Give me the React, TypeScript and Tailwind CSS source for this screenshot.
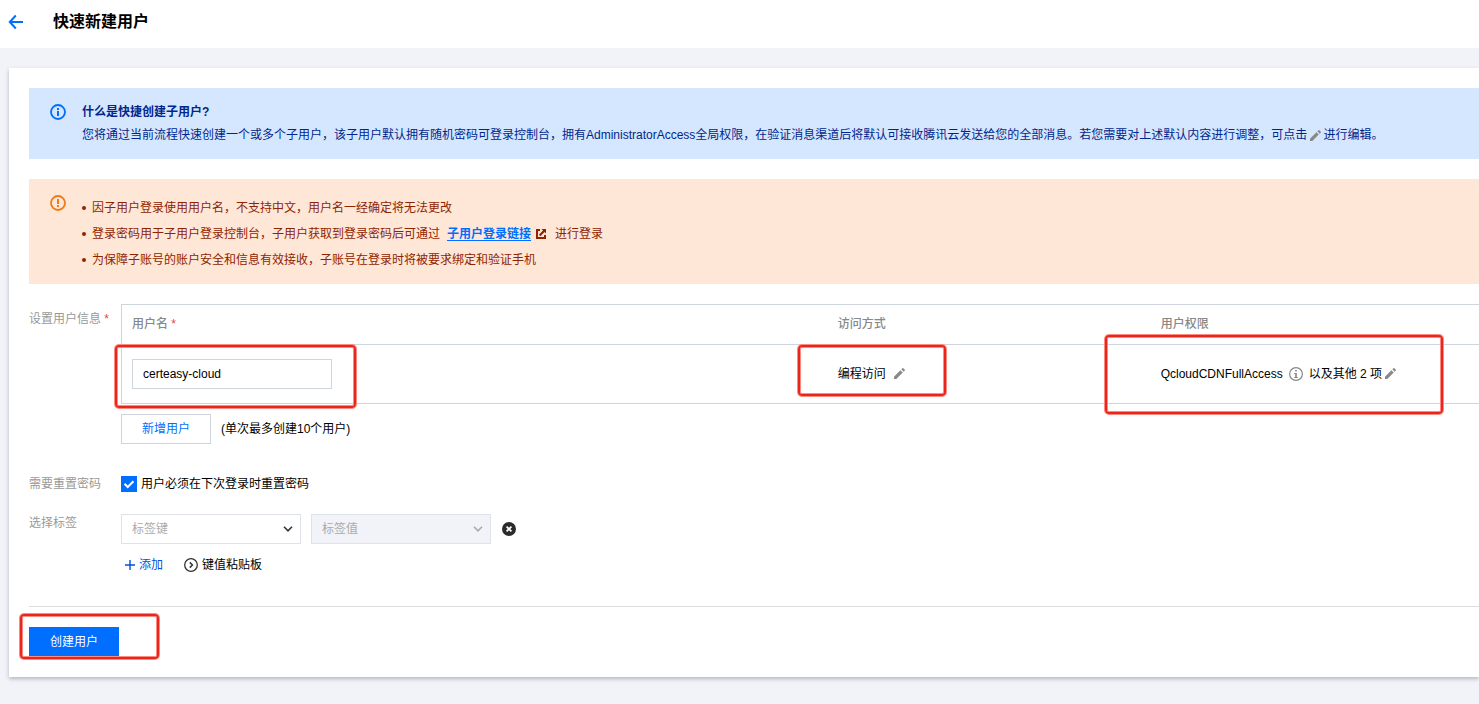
import { useState } from 'react'
import type { ReactNode } from 'react'

function PencilIcon() {
  return (
    <svg viewBox="3 3 18 18" className="size-[11px] fill-[#888]" aria-hidden="true">
      <path d="M3 17.2V21h3.8L17.3 10.5l-3.8-3.8L3 17.2zM20.7 7.1a1 1 0 0 0 0-1.4l-2.4-2.4a1 1 0 0 0-1.4 0l-1.9 1.9 3.8 3.8 1.9-1.9z" />
    </svg>
  )
}

function InfoIcon({ className }: { className: string }) {
  return (
    <svg viewBox="0 0 16 16" className={className} aria-hidden="true">
      <circle cx="8" cy="8" r="7" fill="none" stroke="currentColor" strokeWidth="1.8" />
      <path d="M7 4h2v2H7zM7 7h2v5H7z" fill="currentColor" />
    </svg>
  )
}

function Chevron() {
  return (
    <svg viewBox="0 0 10 6" className="pointer-events-none absolute right-2 top-3 h-1.5 w-2.5" aria-hidden="true">
      <path d="M1 0.8l4 4 4-4" fill="none" stroke="currentColor" strokeWidth="1.6" />
    </svg>
  )
}

// red marker frame drawn over the fields that matter
function Highlight({ className }: { className: string }) {
  return (
    <span
      className={`pointer-events-none absolute z-10 rounded-sm border-2 border-[#e8261c] shadow-[0_0_0_1px_#ff8a82,inset_0_0_0_1px_#ff8a82] ${className}`}
    />
  )
}

function FormRow({ label, labelClass, children }: { label: ReactNode; labelClass?: string; children: ReactNode }) {
  return (
    <div className="flex">
      <div className={`w-[92px] shrink-0 text-[#999] ${labelClass ?? ''}`}>{label}</div>
      <div className="min-w-0 flex-1">{children}</div>
    </div>
  )
}

export default function App() {
  const [username, setUsername] = useState('certeasy-cloud')
  const [resetPassword, setResetPassword] = useState(true)

  return (
    <div className="min-h-screen overflow-x-hidden bg-[#f2f3f8] pb-5 font-['Liberation_Sans','Noto_Sans_CJK_SC',sans-serif] text-[12px] leading-[18px] text-black">
      <header className="flex h-12 items-center bg-white px-2 pb-1">
        <button type="button" aria-label="返回" className="text-[#006eff]">
          <svg viewBox="0 0 16 16" className="size-4" aria-hidden="true">
            <path d="M7.8 1.5L1.8 8l6 6.5M2 8h13" fill="none" stroke="currentColor" strokeWidth="2" />
          </svg>
        </button>
        <h1 className="ml-[29px] text-[16px] font-bold leading-6">快速新建用户</h1>
      </header>

      <main className="ml-[9px] mt-5 bg-white py-5 pl-5 shadow-[0_2px_4px_rgba(54,58,80,0.32)]">
        <section className="flex bg-[#d5e7ff] py-[15px] pl-[21px] pr-5 text-[#00268c]">
          <InfoIcon className="mt-px size-4 shrink-0 text-[#006eff]" />
          <div className="ml-4">
            <h2 className="font-bold">什么是快捷创建子用户?</h2>
            <p className="mt-[5px]">
              您将通过当前流程快速创建一个或多个子用户，该子用户默认拥有随机密码可登录控制台，拥有AdministratorAccess全局权限，在验证消息渠道后将默认可接收腾讯云发送给您的全部消息。若您需要对上述默认内容进行调整，可点击
              <span className="ml-[3px] mr-0.5 inline-block align-middle">
                <PencilIcon />
              </span>
              进行编辑。
            </p>
          </div>
        </section>

        <section className="mt-5 flex bg-[#ffe7d7] py-[15px] pl-[21px] pr-5 text-[#8f2400]">
          <svg viewBox="0 0 16 16" className="mt-px size-4 shrink-0 text-[#f07b16]" aria-hidden="true">
            <circle cx="8" cy="8" r="7" fill="none" stroke="currentColor" strokeWidth="1.8" />
            <path d="M7 4h2v5H7zM7 10h2v2H7z" fill="currentColor" />
          </svg>
          <ul className="ml-4 mt-[5px] space-y-2">
            <li className="flex items-center">
              <span className="mr-1.5 size-1 rounded-full bg-current" />
              因子用户登录使用用户名，不支持中文，用户名一经确定将无法更改
            </li>
            <li className="flex items-center">
              <span className="mr-1.5 size-1 rounded-full bg-current" />
              登录密码用于子用户登录控制台，子用户获取到登录密码后可通过
              <a href="#login" className="ml-[7px] font-bold text-[#006eff] underline underline-offset-2">
                子用户登录链接
              </a>
              <svg viewBox="0 0 10 10" className="ml-[5px] mr-[9px] size-2.5" aria-hidden="true">
                <path d="M4 1H1v8h8V6" fill="none" stroke="currentColor" strokeWidth="2" />
                <path d="M5.5 0H10v4.5L8.6 3.1 4.4 7.3 2.9 5.8l4.1-4.2z" fill="currentColor" />
              </svg>
              进行登录
            </li>
            <li className="flex items-center">
              <span className="mr-1.5 size-1 rounded-full bg-current" />
              为保障子账号的账户安全和信息有效接收，子账号在登录时将被要求绑定和验证手机
            </li>
          </ul>
        </section>

        <form className="mt-5" onSubmit={e => e.preventDefault()}>
          <FormRow
            labelClass="pt-1.5"
            label={
              <>
                设置用户信息 <span className="text-[#e54545]">*</span>
              </>
            }
          >
            <div className="border-y border-l border-[#cfd5de]">
              <table className="w-full table-fixed text-left">
                <colgroup>
                  <col className="w-[52%]" />
                  <col className="w-[323px]" />
                  <col />
                </colgroup>
                <thead className="text-[#888]">
                  <tr className="h-[39px] border-b border-[#cfd5de]">
                    <th className="px-2.5 font-medium">
                      用户名 <span className="text-[#e54545]">*</span>
                    </th>
                    <th className="px-2.5 font-medium">访问方式</th>
                    <th className="px-2.5 font-medium">用户权限</th>
                  </tr>
                </thead>
                <tbody>
                  <tr className="h-[59px]">
                    <td className="relative px-2.5">
                      <input
                        aria-label="用户名"
                        value={username}
                        onChange={e => setUsername(e.target.value)}
                        className="block h-[30px] w-[200px] border border-[#cfd5de] px-2.5 outline-none"
                      />
                      <Highlight className="-left-[7px] top-0 h-[63px] w-[241px]" />
                    </td>
                    <td className="relative px-2.5">
                      <div className="flex items-center">
                        编程访问
                        <button type="button" aria-label="编辑访问方式" className="ml-2">
                          <PencilIcon />
                        </button>
                      </div>
                      <Highlight className="-left-[30px] top-0 h-[51px] w-[148px]" />
                    </td>
                    <td className="relative px-2.5">
                      <div className="flex items-center">
                        QcloudCDNFullAccess
                        <svg viewBox="0 0 14 14" className="mx-1.5 size-3.5 text-[#888]" aria-hidden="true">
                          <circle cx="7" cy="7" r="6.4" fill="none" stroke="currentColor" strokeWidth="1.2" />
                          <path d="M6.2 3h1.6v1.6H6.2zM5.2 6h2.6v4h1v1H5.2v-1h1V7h-1z" fill="currentColor" />
                        </svg>
                        以及其他 2 项
                        <button type="button" aria-label="编辑用户权限" className="ml-[3px]">
                          <PencilIcon />
                        </button>
                      </div>
                      <Highlight className="-left-[46px] -top-[10px] h-[79px] w-[338px]" />
                    </td>
                  </tr>
                </tbody>
              </table>
            </div>
            <div className="mt-2.5 flex items-center">
              <button type="button" className="h-[30px] w-[90px] border border-[#cfd5de] text-[#006eff]">
                新增用户
              </button>
              <span className="ml-2.5">(单次最多创建10个用户)</span>
            </div>
          </FormRow>

          <div className="mt-8 leading-4">
            <FormRow label="需要重置密码">
              <label className="flex items-center">
                <span className="relative mr-1 size-4">
                  <input
                    type="checkbox"
                    checked={resetPassword}
                    onChange={e => setResetPassword(e.target.checked)}
                    className="block size-4 appearance-none border border-[#cfd5de] checked:border-[#006eff] checked:bg-[#006eff]"
                  />
                  <svg viewBox="0 0 16 16" className="pointer-events-none absolute inset-0 size-4" aria-hidden="true">
                    <path d="M3.5 7.8l3.2 3.2 5.8-5.8" fill="none" stroke="white" strokeWidth="2" />
                  </svg>
                </span>
                用户必须在下次登录时重置密码
              </label>
            </FormRow>
          </div>

          <div className="mt-[22px]">
            <FormRow label="选择标签">
              <div className="flex items-center gap-2.5">
                <div className="relative w-[180px] text-[#333]">
                  <select
                    aria-label="标签键"
                    className="block h-[30px] w-full appearance-none border border-[#dfe3e9] bg-white px-2.5 text-[#aaa] outline-none"
                  >
                    <option>标签键</option>
                  </select>
                  <Chevron />
                </div>
                <div className="relative w-[180px] text-[#aaa]">
                  <select
                    aria-label="标签值"
                    disabled
                    className="block h-[30px] w-full appearance-none border border-[#dfe3e9] bg-[#f2f3f8] px-2.5 text-[#aaa] opacity-100"
                  >
                    <option>标签值</option>
                  </select>
                  <Chevron />
                </div>
                <button type="button" aria-label="删除标签" className="ml-px">
                  <svg viewBox="0 0 14 14" className="size-3.5" aria-hidden="true">
                    <circle cx="7" cy="7" r="7" fill="#2b2b2b" />
                    <path d="M4.6 4.6l4.8 4.8M9.4 4.6L4.6 9.4" stroke="white" strokeWidth="1.8" />
                  </svg>
                </button>
              </div>
              <div className="mt-3 flex items-center pl-1">
                <button type="button" className="flex items-center gap-1 text-[#0052d9]">
                  <svg viewBox="0 0 10 10" className="size-2.5" aria-hidden="true">
                    <path d="M5 0v10M0 5h10" stroke="currentColor" strokeWidth="1.4" />
                  </svg>
                  添加
                </button>
                <button type="button" className="ml-[21px] flex items-center gap-1">
                  <svg viewBox="0 0 14 14" className="size-3.5" aria-hidden="true">
                    <circle cx="7" cy="7" r="6.3" fill="none" stroke="#333" strokeWidth="1.3" />
                    <path d="M5.8 4.4L8.4 7 5.8 9.6" fill="none" stroke="#333" strokeWidth="1.5" />
                  </svg>
                  键值粘贴板
                </button>
              </div>
            </FormRow>
          </div>

          <div className="mt-8 border-t border-[#dcdcdc] pt-5">
            <div className="relative w-[90px]">
              <button type="submit" className="block h-[30px] w-full bg-[#006eff] text-white">
                创建用户
              </button>
              <Highlight className="-left-[9px] -top-[13px] h-[45px] w-[139px]" />
            </div>
          </div>
        </form>
      </main>
    </div>
  )
}
